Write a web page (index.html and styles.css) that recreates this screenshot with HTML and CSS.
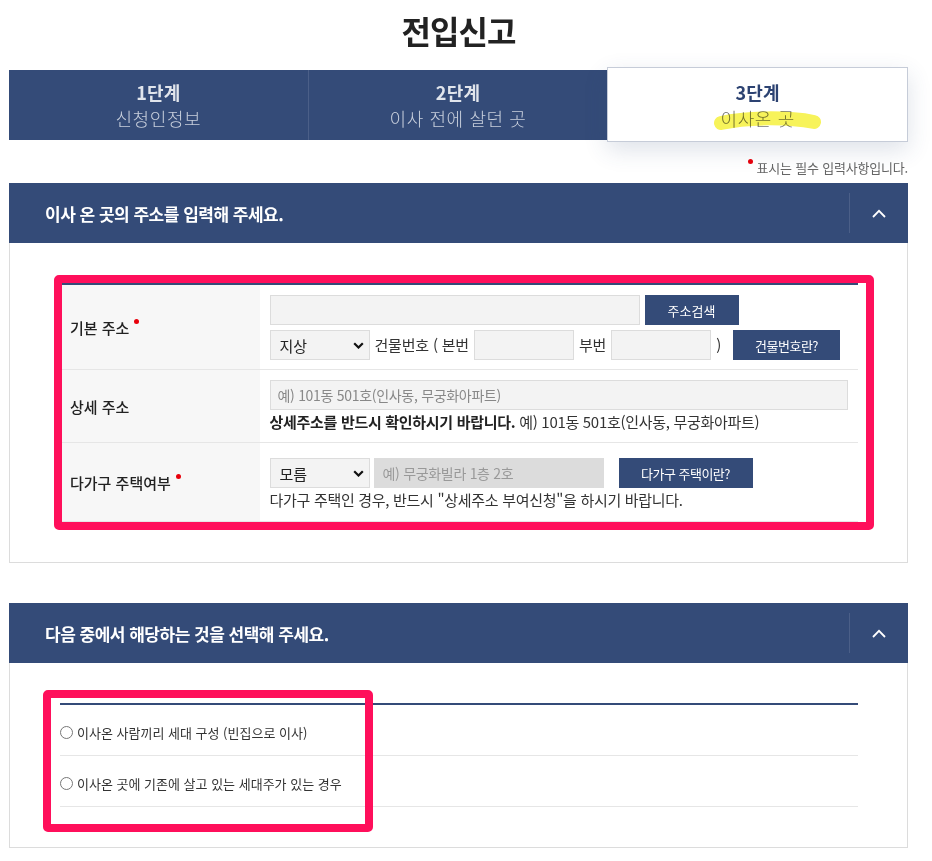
FILE: index.html
```html
<!DOCTYPE html>
<html lang="ko">
<head>
<meta charset="utf-8">
<title>전입신고</title>
<link rel="stylesheet" href="styles.css">
</head>
<body>
<div class="page">
  <h1 class="title">전입신고</h1>

  <div class="steps">
    <div class="step"><strong>1단계</strong><span>신청인정보</span></div>
    <div class="step"><strong>2단계</strong><span>이사 전에 살던 곳</span></div>
    <div class="step active"><strong>3단계</strong><span>이사온 곳</span></div>
  </div>

  <p class="note"><i class="req"></i>표시는 필수 입력사항입니다.</p>

  <section class="panel">
    <div class="panel-head">
      <h2>이사 온 곳의 주소를 입력해 주세요.</h2>
      <button class="toggle" type="button" aria-label="접기">
        <svg width="14" height="9" viewBox="0 0 14 9"><polyline points="1,8 7,1.8 13,8" fill="none" stroke="#fff" stroke-width="1.8"/></svg>
      </button>
    </div>
    <div class="panel-body">
      <table class="addr">
        <tr>
          <th><span class="lbl req-after">기본 주소</span></th>
          <td>
            <div class="line">
              <input class="inp w370" type="text">
              <button class="btn btn-search" type="button">주소검색</button>
            </div>
            <div class="line">
              <span class="sel">
                <select><option>지상</option></select>
                <svg class="arrow" width="11" height="7" viewBox="0 0 11 7"><polyline points="1.2,1.2 5.5,5.5 9.8,1.2" fill="none" stroke="#111" stroke-width="2.2"/></svg>
              </span>
              <span class="txt">건물번호 ( 본번</span>
              <input class="inp w100" type="text">
              <span class="txt">부번</span>
              <input class="inp w100" type="text">
              <span class="txt">)</span>
              <button class="btn btn-bno" type="button">건물번호란?</button>
            </div>
          </td>
        </tr>
        <tr class="row-detail">
          <th><span class="lbl">상세 주소</span></th>
          <td>
            <input class="inp full" type="text" placeholder="예) 101동 501호(인사동, 무궁화아파트)">
            <p class="help"><b>상세주소를 반드시 확인하시기 바랍니다.</b> 예) 101동 501호(인사동, 무궁화아파트)</p>
          </td>
        </tr>
        <tr class="row-multi">
          <th><span class="lbl req-after">다가구 주택여부</span></th>
          <td>
            <div class="line tight">
              <span class="sel">
                <select><option>모름</option></select>
                <svg class="arrow" width="11" height="7" viewBox="0 0 11 7"><polyline points="1.2,1.2 5.5,5.5 9.8,1.2" fill="none" stroke="#111" stroke-width="2.2"/></svg>
              </span>
              <input class="inp w230 disabled" type="text" placeholder="예) 무궁화빌라 1층 2호" disabled>
              <button class="btn btn-multi" type="button">다가구 주택이란?</button>
            </div>
            <p class="help">다가구 주택인 경우, 반드시 "상세주소 부여신청"을 하시기 바랍니다.</p>
          </td>
        </tr>
      </table>
    </div>
  </section>

  <section class="panel panel-2">
    <div class="panel-head">
      <h2>다음 중에서 해당하는 것을 선택해 주세요.</h2>
      <button class="toggle" type="button" aria-label="접기">
        <svg width="14" height="9" viewBox="0 0 14 9"><polyline points="1,8 7,1.8 13,8" fill="none" stroke="#fff" stroke-width="1.8"/></svg>
      </button>
    </div>
    <div class="panel-body">
      <div class="opts">
        <label class="opt"><input type="radio" name="kind"><span>이사온 사람끼리 세대 구성 (빈집으로 이사)</span></label>
        <label class="opt"><input type="radio" name="kind"><span>이사온 곳에 기존에 살고 있는 세대주가 있는 경우</span></label>
      </div>
    </div>
  </section>

  <svg class="hl" width="120" height="30" viewBox="0 0 120 30"><path d="M 13 17 C 40 11, 80 11, 106 16" fill="none" stroke="#f7f35a" stroke-width="14" stroke-linecap="round"/></svg>
  <div class="mark mark-1"></div>
  <div class="mark mark-2"></div>
</div>
</body>
</html>
```
FILE: styles.css
```css
body {
  margin: 0;
  font-family: "Noto Sans CJK KR", "Noto Sans", sans-serif;
  color: #333;
  background: #fff;
}

.page {
  position: relative;
  width: 899px;
  padding-left: 9px;
}

.title {
  margin: 0;
  padding-top: 10px;
  font-size: 32px;
  line-height: 40px;
  font-weight: 700;
  text-align: center;
  color: #222;
  letter-spacing: -1px;
}

/* steps */
.steps {
  display: flex;
  margin-top: 20px;
  height: 70px;
  background: #344b78;
}
.step {
  flex: 1;
  display: flex;
  flex-direction: column;
  align-items: center;
  justify-content: center;
  color: #e1e5ec;
}
.step + .step { border-left: 1px solid #4b5f88; }
.step strong {
  font-size: 18px;
  line-height: 26px;
  font-weight: 700;
  letter-spacing: 0.2px;
}
.step span {
  font-size: 18px;
  line-height: 26px;
  font-weight: 300;
  letter-spacing: 0.6px;
  color: #c9d0dd;
}
.step.active {
  position: relative;
  margin: -3px 0 -2px;
  background: #fff;
  border: 1px solid #c6ccd8;
  box-shadow: 0 8px 22px rgba(52, 75, 120, 0.16);
}
.step.active strong { color: #2d4372; }
.step.active span { color: #777; }

.note {
  margin: 18px 0 5px;
  text-align: right;
  font-size: 13px;
  line-height: 20px;
  color: #666;
  letter-spacing: -0.2px;
}
.req {
  display: inline-block;
  width: 5px;
  height: 5px;
  border-radius: 50%;
  background: #e8000b;
  vertical-align: 9px;
  margin-right: 4px;
}

/* panels */
.panel-head {
  display: flex;
  align-items: center;
  height: 60px;
  background: #344b78;
}
.panel-head h2 {
  flex: 1;
  margin: 0;
  padding-left: 36px;
  font-size: 17px;
  font-weight: 700;
  color: #fff;
  letter-spacing: -0.5px;
}
.toggle {
  width: 59px;
  height: 40px;
  padding: 0;
  border: 0;
  border-left: 1px solid #4b5f88;
  background: transparent;
  display: flex;
  align-items: center;
  justify-content: center;
}
.panel-body {
  border: 1px solid #dcdcdc;
  border-top: 0;
  padding: 40px 49px 40px 50px;
}
.panel-2 { margin-top: 40px; }

/* address table */
.addr {
  width: 100%;
  border-collapse: collapse;
  border-top: 2px solid #344b78;
}
.addr th {
  width: 25%;
  padding: 0 10px;
  background: #f7f7f7;
  text-align: left;
  vertical-align: middle;
  font-size: 15px;
  font-weight: 500;
  color: #222;
  border-bottom: 1px solid #e6e6e6;
}
.addr td {
  padding: 10px 10px 9px;
  font-size: 15px;
  color: #333;
  border-bottom: 1px solid #e6e6e6;
}
.addr .row-detail td { padding-bottom: 10px; }
.addr .row-multi td { padding: 15px 10px 11px; }

.req-after::after {
  content: "";
  display: inline-block;
  width: 5px;
  height: 5px;
  border-radius: 50%;
  background: #e8000b;
  vertical-align: 10px;
  margin-left: 5px;
}

.line {
  display: flex;
  align-items: center;
  gap: 5px;
}
.line + .line { margin-top: 5px; }
.line.tight { gap: 4px; }

.txt {
  white-space: nowrap;
  line-height: 20px;
  letter-spacing: -0.2px;
}

.help {
  margin: 2px 0 0;
  line-height: 20px;
  font-size: 15px;
  color: #333;
  letter-spacing: -0.3px;
}
.help b { color: #222; font-weight: 700; }

.inp {
  box-sizing: border-box;
  height: 30px;
  margin: 0;
  padding: 0 7px;
  border: 1px solid #dcdcdc;
  background: #f3f3f3;
  font-family: inherit;
  font-size: 14px;
  letter-spacing: -0.3px;
  color: #333;
  outline: none;
}
.inp::placeholder { color: #888; }
.inp.disabled {
  background: #dcdcdc;
  border-color: #dcdcdc;
  padding-left: 8px;
}
.inp.disabled::placeholder { color: #999; }
.w370 { width: 370px; }
.w100 { width: 100px; }
.w230 { width: 230px; }
.full { display: block; width: 100%; }

.sel {
  position: relative;
  display: block;
  width: 100px;
  height: 30px;
  flex: none;
}
.sel select {
  appearance: none;
  -webkit-appearance: none;
  box-sizing: border-box;
  width: 100%;
  height: 100%;
  margin: 0;
  padding: 0 9px;
  border: 1px solid #dcdcdc;
  border-radius: 0;
  background: #f3f3f3;
  font-family: inherit;
  font-size: 15px;
  color: #222;
}
.sel .arrow {
  position: absolute;
  right: 6px;
  top: 12px;
  pointer-events: none;
}

.btn {
  height: 30px;
  padding: 0;
  border: 0;
  background: #344b78;
  color: #fff;
  font-family: inherit;
  font-size: 13px;
  letter-spacing: -0.5px;
  flex: none;
}
.btn-search { width: 94px; letter-spacing: 0; }
.btn-bno { width: 107px; margin-left: 7px; }
.btn-multi { width: 134px; margin-left: 11px; }

/* options */
.opts { border-top: 2px solid #344b78; }
.opt {
  box-sizing: border-box;
  display: flex;
  align-items: center;
  gap: 4px;
  height: 51px;
  padding-top: 4px;
  border-bottom: 1px solid #e6e6e6;
  font-size: 13px;
  color: #333;
}
.opt input {
  appearance: none;
  -webkit-appearance: none;
  box-sizing: border-box;
  width: 13px;
  height: 13px;
  margin: 0;
  border: 1px solid #777;
  border-radius: 50%;
  background: #fff;
}

/* annotations */
.hl {
  position: absolute;
  left: 708px;
  top: 106px;
  mix-blend-mode: multiply;
  pointer-events: none;
}
.mark {
  position: absolute;
  box-sizing: border-box;
  border: 8px solid #ff0f5b;
  border-radius: 5px;
  pointer-events: none;
}
.mark-1 { left: 54px; top: 275px; width: 820px; height: 255px; }
.mark-2 { left: 43px; top: 690px; width: 330px; height: 142px; }
```
